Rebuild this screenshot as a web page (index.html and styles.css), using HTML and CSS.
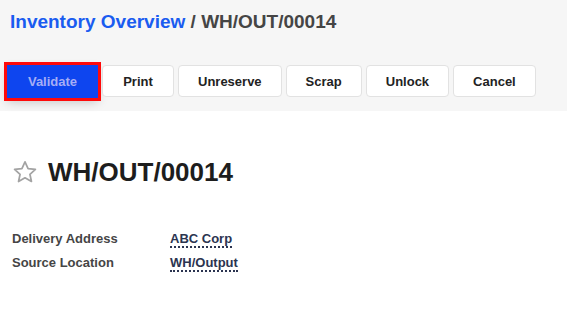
FILE: index.html
```html
<!DOCTYPE html>
<html lang="en">
<head>
  <meta charset="UTF-8">
  <title>WH/OUT/00014</title>
  <link rel="stylesheet" href="styles.css">
</head>
<body>

<div class="control-panel">
  <div class="breadcrumb">
    <a href="#" class="crumb-link">Inventory Overview</a>
    <span class="crumb-sep">/</span>
    <span class="crumb-current">WH/OUT/00014</span>
  </div>

  <div class="action-bar">
    <button class="btn btn-primary">Validate</button>
    <button class="btn">Print</button>
    <button class="btn">Unreserve</button>
    <button class="btn">Scrap</button>
    <button class="btn">Unlock</button>
    <button class="btn">Cancel</button>
  </div>
</div>

<div class="sheet">
  <div class="title-row">
    <svg class="star" width="26" height="26" viewBox="0 0 24 24">
      <path d="M12 2.6l2.85 6.2 6.75.75-5.05 4.55 1.4 6.65L12 17.35l-5.95 3.4 1.4-6.65L2.4 9.55l6.75-.75z" fill="none" stroke="#a3a3a3" stroke-width="1.6" stroke-linejoin="round"/>
    </svg>
    <h1>WH/OUT/00014</h1>
  </div>

  <div class="fields">
    <div class="field-label">Delivery Address</div>
    <div class="field-value"><span>ABC Corp</span></div>
    <div class="field-label">Source Location</div>
    <div class="field-value"><span>WH/Output</span></div>
  </div>
</div>

</body>
</html>
```

FILE: styles.css
```css
body {
  margin: 0;
  font-family: "Liberation Sans", Arial, sans-serif;
  background-color: #fff;
  color: #222;
}

.control-panel {
  background-color: #f6f6f6;
  padding: 10px 0 13px 10px;
  height: 88px;
}

.breadcrumb {
  font-size: 19px;
  font-weight: bold;
  line-height: 24px;
  color: #454545;
}

.crumb-link {
  color: #1a5cf0;
  text-decoration: none;
}

.action-bar {
  display: flex;
  gap: 4px;
  margin-top: 31px;
  margin-left: -3px;
}

.btn {
  height: 32px;
  padding: 0 19px;
  min-width: 72px;
  background-color: #fff;
  border: 1px solid #e2e2e2;
  border-radius: 4px;
  font-family: inherit;
  font-size: 13px;
  font-weight: bold;
  color: #222;
  cursor: pointer;
}

.btn-primary {
  width: 91px;
  height: 33px;
  background-color: #0e45ef;
  border: 0;
  border-radius: 0;
  color: #a6aef5;
  outline: 3px solid #ff0a0a;
  box-shadow: 0 4px 10px rgba(0, 0, 0, 0.2);
}

.sheet {
  padding: 45px 12px 0 12px;
}

.title-row {
  display: flex;
  align-items: center;
  gap: 10px;
}

.star {
  flex-shrink: 0;
}

h1 {
  margin: 0;
  font-size: 26px;
  line-height: 32px;
  color: #1d1d1d;
}

.fields {
  display: grid;
  grid-template-columns: 158px auto;
  row-gap: 6px;
  margin-top: 42px;
  font-size: 13px;
  font-weight: bold;
  line-height: 18px;
}

.field-label {
  color: #454545;
}

.field-value span {
  color: #2b3450;
  border-bottom: 2px dotted #2b3450;
}
```
